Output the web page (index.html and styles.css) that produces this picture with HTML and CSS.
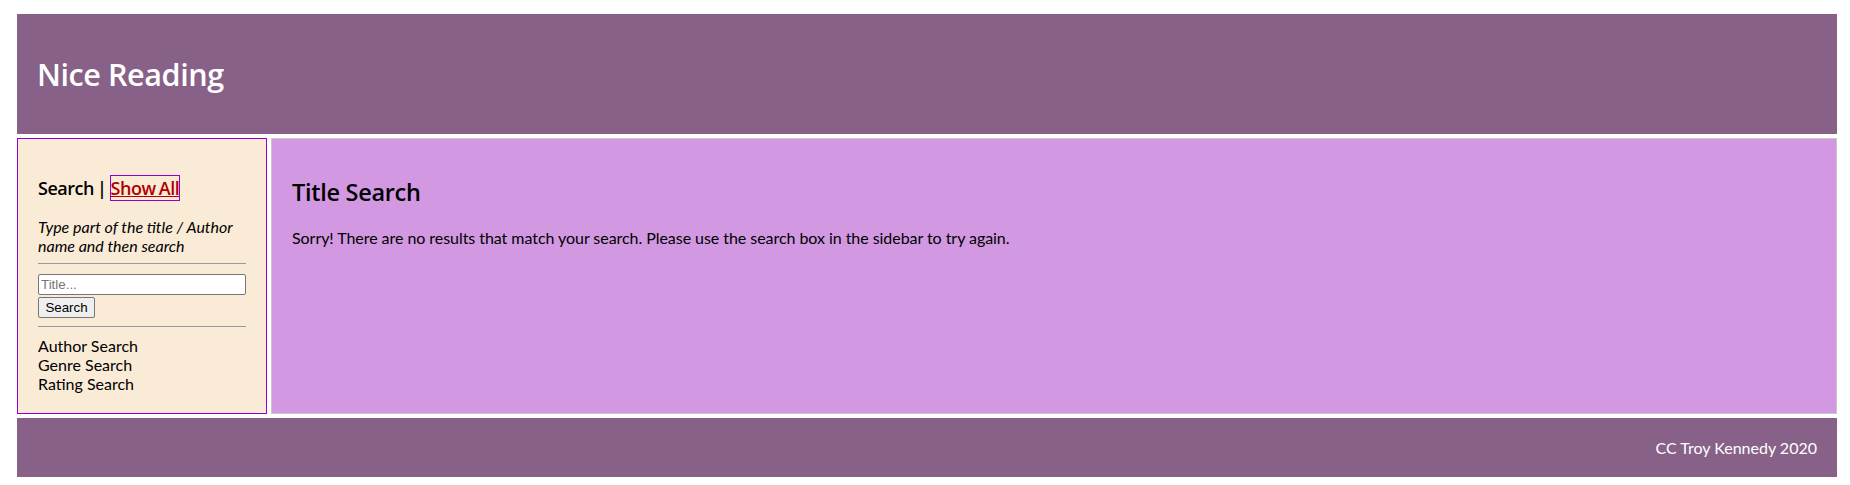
FILE: index.html
```html
<!DOCTYPE html>
<html lang="en">
<head>
<meta charset="utf-8">
<title>Nice Reading</title>
<link rel="stylesheet" href="styles.css">
</head>
<body>
<div class="page">
  <header class="site-header">
    <h1 class="site-title">Nice Reading</h1>
  </header>
  <aside class="sidebar">
    <h3 class="sidebar-title">Search | <a class="show-all" href="#">Show All</a></h3>
    <p class="hint">Type part of the title / Author name and then search</p>
    <hr class="rule">
    <form class="search-form">
      <input class="search-input" type="text" placeholder="Title...">
      <button class="search-button" type="button">Search</button>
    </form>
    <hr class="rule">
    <nav class="search-links">
      <a href="#">Author Search</a>
      <a href="#">Genre Search</a>
      <a href="#">Rating Search</a>
    </nav>
  </aside>
  <main class="main">
    <h2 class="main-title">Title Search</h2>
    <p class="message">Sorry! There are no results that match your search. Please use the search box in the sidebar to try again.</p>
  </main>
  <footer class="site-footer">
    <p class="credit">CC Troy Kennedy 2020</p>
  </footer>
</div>
</body>
</html>
```
FILE: styles.css
```css
html, body {
  margin: 0;
  padding: 0;
  background: #ffffff;
}
body {
  font-family: "Lato", "Liberation Sans", sans-serif;
  font-size: 16px;
  color: #000;
}
.page {
  margin: 14px 13px 0 17px;
  display: grid;
  grid-template-columns: 250px 1fr;
  gap: 4px;
}
.site-header {
  grid-column: 1 / -1;
  height: 120px;
  background: #876188;
  display: flex;
  align-items: center;
  padding: 0 20px;
}
.site-title {
  margin: 0;
  font-family: "Open Sans", sans-serif;
  font-weight: 600;
  font-size: 30.5px;
  line-height: 36px;
  color: #fff;
  letter-spacing: -0.4px;
}
.sidebar {
  background: #faebd7;
  border: 1px solid #9400d3;
  padding: 20px;
}
.sidebar-title {
  margin: 18px 0 0;
  font-family: "Open Sans", sans-serif;
  font-weight: 600;
  font-size: 18px;
  line-height: 22px;
  letter-spacing: -0.5px;
  word-spacing: -1px;
}
.show-all {
  color: #b00000;
  text-decoration: underline;
  border: 1px solid #9400d3;
}
.hint {
  margin: 18px 0 8px;
  font-style: italic;
  line-height: 19px;
}
.rule {
  margin: 8px 0;
  border: 0;
  border-top: 1px solid #9a9a9a;
  height: 0;
}
.search-form {
  display: flex;
  flex-direction: column;
  align-items: flex-start;
  gap: 2px;
  margin-top: 10px;
}
.search-input {
  box-sizing: border-box;
  width: 208px;
  height: 21px;
  font-family: "Liberation Sans", Arial, sans-serif;
  font-size: 13.33px;
  padding: 1px 2px;
  border: 1px solid #767676;
  border-radius: 2px;
  background: #fff;
}
.search-button {
  box-sizing: border-box;
  height: 21px;
  width: 57px;
  font-family: "Liberation Sans", Arial, sans-serif;
  font-size: 13.33px;
  padding: 1px 6px;
  border: 1px solid #767676;
  border-radius: 2px;
  background: #efefef;
  color: #000;
}
.search-links {
  display: flex;
  flex-direction: column;
  line-height: 19px;
  margin-top: 9px;
}
.search-links a {
  color: #000;
  text-decoration: none;
}
.main {
  background: #d298e2;
  border: 1px solid #c8c8c8;
  padding: 20px;
}
.main-title {
  margin: 20px 0 0;
  font-family: "Open Sans", sans-serif;
  font-weight: 600;
  font-size: 23.5px;
  line-height: 27px;
  letter-spacing: -0.3px;
}
.message {
  margin: 22px 0 0;
  line-height: 19px;
  letter-spacing: -0.05px;
}
.site-footer {
  grid-column: 1 / -1;
  background: #876188;
  padding: 20px;
  text-align: right;
}
.credit {
  margin: 0;
  color: #fff;
  line-height: 19px;
}
```
